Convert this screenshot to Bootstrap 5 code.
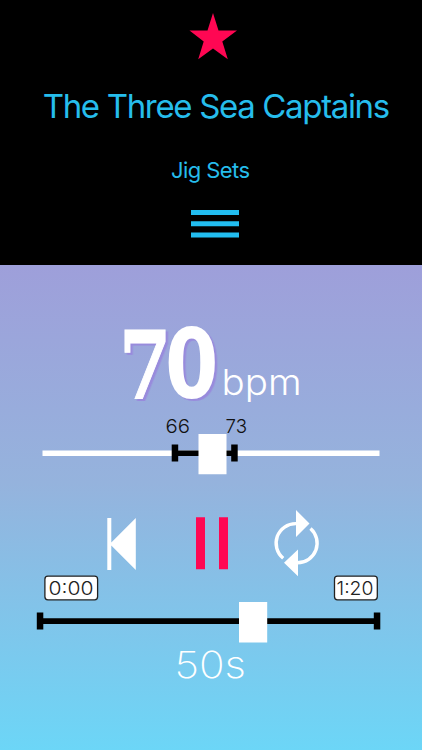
<!DOCTYPE html>
<html lang="en">
<head>
<meta charset="utf-8">
<meta name="viewport" content="width=device-width, initial-scale=1">
<title>The Three Sea Captains</title>
<link href="https://cdn.jsdelivr.net/npm/bootstrap@5.3.0/dist/css/bootstrap.min.css" rel="stylesheet">
<style>
body{width:422px;height:750px;font-family:Inter,"Liberation Sans",sans-serif}
svg{display:block}
svg text{font-family:Inter,"Liberation Sans",sans-serif}
.tune-head{height:265px;background:#000;padding:13px 0 0 3px}
.tune-title{font-size:33px;line-height:40px;font-weight:400;margin:27px 0 0 8px}
.tune-set{font-size:22px;line-height:28px;margin:31px 3px 0 0}
.menu-btn{margin:8px 0 0 5px}
.player{height:485px;background:linear-gradient(#9e9fda,#95b3dd 45%,#6cd6f7)}
.tempo{padding-top:50px}
.thin{font-weight:300}
svg .slab{font-family:"DejaVu Serif","Liberation Serif",serif;font-weight:700;font-size:94px;filter:drop-shadow(3px 2px 0 #988bdc)}
.slab .round{font-family:"DejaVu Sans",sans-serif;font-size:96px}
</style>
<script src="https://cdn.jsdelivr.net/npm/bootstrap@5.3.0/dist/js/bootstrap.bundle.min.js"></script>
</head>
<body class="m-0 overflow-hidden">
<header class="tune-head d-flex flex-column align-items-center">
  <svg class="flex-shrink-0" width="48" height="47" viewBox="188.500 13 48 47" role="img" aria-label="Favourite"><path fill="#ff0753" d="M212.500 13L218 30.400H236.500L221.800 41.500L227.300 59.300L212.500 48.500L197.700 59.300L203.200 41.500L189 30.400H207Z"/></svg>
  <h1 class="tune-title text-nowrap mb-0"><svg width="350" height="40"><text x="0.700" y="31" fill="#26bdec" textLength="347.500">The Three Sea Captains</text></svg></h1>
  <p class="tune-set mb-3"><svg width="80" height="28"><text x="0" y="20" fill="#26bdec" textLength="79">Jig Sets</text></svg></p>
  <button class="btn menu-btn p-0 border-0 rounded-0" type="button" aria-label="Menu">
    <svg width="50" height="30" viewBox="190.500 210 50 30"><path fill="#22bdf0" d="M191.500 210h48v5h-48zM191.500 221.300h48v5h-48zM191.500 232.500h48v5h-48z"/></svg>
  </button>
</header>
<main class="player">
  <section class="tempo">
    <svg width="422" height="95" viewBox="0 315 422 95" overflow="visible">
      <text class="slab" transform="translate(119 397.500) scale(.8 1)" x="0 57.500" y="0" fill="#fff" stroke="#fff" stroke-width="1">7<tspan class="round" stroke="none">0</tspan></text>
      <text class="thin" x="221.500" y="395" font-size="36" fill="#fff" textLength="80" lengthAdjust="spacingAndGlyphs">bpm</text>
    </svg>
  </section>
  <section>
    <svg width="422" height="70" viewBox="0 410 422 70">
      <g class="thin" font-size="19" fill="#111"><text x="165.500" y="432.700" textLength="24.500" lengthAdjust="spacingAndGlyphs">66</text><text x="225.500" y="432.700" textLength="21.500" lengthAdjust="spacingAndGlyphs">73</text></g>
      <path fill="#fff" d="M42.500 450.500h337v5.500h-337z"/>
      <path d="M171.700 444.500h6.500v6h53v-6h6.500v17h-6.500V456h-53v5.500h-6.500z"/>
      <path fill="#fff" d="M198.500 434h28v40.300h-28z"/>
    </svg>
  </section>
  <section>
    <svg width="422" height="90" viewBox="0 480 422 90" overflow="visible">
      <path fill="#fff" d="M107.300 518h4v24.500L135.800 518v52L111.300 545.500V570h-4z"/>
      <path fill="#ff0753" d="M196 517.200h9v52h-9zM219 517.200h9v52h-9z"/>
      <path fill="none" stroke="#fff" stroke-width="3.400" d="M296 523.600A19.600 19.600 0 0 0 283.200 558.300M310.500 528.500A19.600 19.600 0 0 1 297.500 562.800"/>
      <path fill="#fff" d="M296 510v27l13.500-13.500zM298 549.500v26.800l-14-13.600z"/>
    </svg>
  </section>
  <section>
    <svg width="422" height="180" viewBox="0 570 422 180">
      <g fill="#fff" stroke="#222" stroke-width="1.300"><rect x="44.900" y="576.200" width="52.700" height="23.600" rx="3"/><rect x="334.500" y="576.200" width="42.800" height="23.600" rx="3"/></g>
      <g class="thin" font-size="19" fill="#222"><text x="48.500" y="594.900" textLength="45" lengthAdjust="spacingAndGlyphs">0:00</text><text x="336.500" y="594.900" textLength="37" lengthAdjust="spacingAndGlyphs">1:20</text></g>
      <path d="M36.800 612.500h6.500v5.700h330.500v-5.700h6.500v17h-6.500V624H43.300v5.500h-6.500z"/>
      <path fill="#fff" d="M239 602h28.200v40.500H239z"/>
      <text x="174.500" y="678.300" font-size="37" font-weight="200" fill="#fff" textLength="71.500" lengthAdjust="spacingAndGlyphs">50s</text>
    </svg>
  </section>
</main>
</body>
</html>
